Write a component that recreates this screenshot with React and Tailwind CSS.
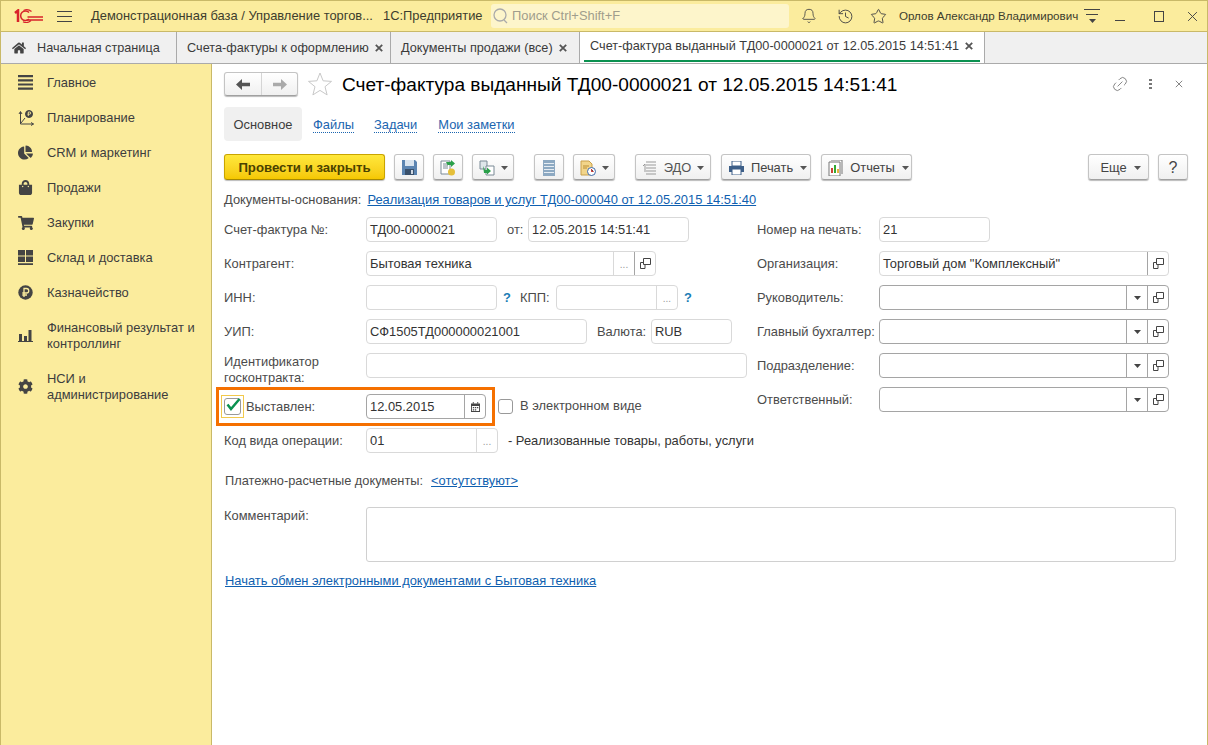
import React from "react";
import { Bell, History, Star, Link2 } from "lucide-react";
import { FaHome, FaChartPie, FaShoppingBag, FaShoppingCart, FaCog } from "react-icons/fa";

const X = ({ c = "#555", s = 8, w = 1.8 }) => (
  <svg width={s} height={s} viewBox="0 0 8 8" className="shrink-0"><path d="M.8.8l6.4 6.4M7.2.8L.8 7.2" stroke={c} strokeWidth={w} /></svg>
);
const Caret = ({ c = "#555" }) => (
  <svg width="7" height="4" viewBox="0 0 7 4" className="shrink-0"><path d="M0 0h7L3.5 4z" fill={c} /></svg>
);
const Copy = () => (
  <svg width="11" height="11" viewBox="0 0 11 11" fill="none" stroke="#444"><path d="M3.500.5h7v6h-7zM3.500 4.500h-3v6h4.500V6.500" /></svg>
);

const Logo = () => (
  <svg width="30" height="14" viewBox="0 0 30 14" fill="none" stroke="#d8232a" strokeWidth="1.500">
    <path d="M1 4l3-2.500V13" strokeWidth="2.500" />
    <path d="M15 3.500a4.800 4.800 0 1 0 0 6.500" strokeWidth="1.500" />
    <path d="M17.500 2.500a7.500 7.500 0 0 0-8-1M17 11.500a7 7 0 0 1-8 1.200" strokeWidth="1.200" />
    <path d="M13.500 8H29M12.500 11H29" strokeWidth="1.500" />
  </svg>
);

const Sb = {
  main: <svg width="15" height="15" viewBox="0 0 15 15" fill="#444"><path d="M0 0h15v2.200H0zM0 4.200h15v2.200H0zM0 8.400h15v2.200H0zM0 12.600h15v2.200H0z" /></svg>,
  plan: <svg width="16" height="16" viewBox="0 0 16 16" fill="none" stroke="#444"><path d="M2.500 2v12h13M1 4l1.500-2.500L4 4M13 12.500l2.500 1.500-2.500 1.500M3 13l4-5" /><circle cx="11" cy="4" r="3.500" fill="#444" /><path d="M10.300 6V2h1.300a1 1 0 0 1 0 2.200H9.500" stroke="#fbec9d" strokeWidth=".9" /></svg>,
  crm: <FaChartPie size={15} color="#444" />,
  sale: <FaShoppingBag size={15} color="#444" />,
  cart: <FaShoppingCart size={16} color="#444" />,
  store: <svg width="15" height="15" viewBox="0 0 15 15" fill="#444"><path d="M0 0h7v5.500H0zM8 0h7v5.500H8zM0 6.500h7V12H0zM8 6.500h7V12H8zM0 13.300h15V15H0z" /></svg>,
  money: <svg width="15" height="15" viewBox="0 0 15 15"><circle cx="7.500" cy="7.500" r="7.200" fill="#444" /><path d="M6 12V3.500h2.500a2.200 2.200 0 0 1 0 4.500H4.300M4.300 10H9" stroke="#fbec9d" strokeWidth="1.300" fill="none" /></svg>,
  fin: <svg width="15" height="13" viewBox="0 0 15 13" fill="#444"><path d="M1 5h3v7H1zM6 7h3v5H6zM10.500 1h3v11h-3zM0 12h15v1H0z" /></svg>,
  gear: <FaCog size={15} color="#444" />,
};

const menu = [
  ["main", ["Главное"], 35],
  ["plan", ["Планирование"], 35],
  ["crm", ["CRM и маркетинг"], 35],
  ["sale", ["Продажи"], 35],
  ["cart", ["Закупки"], 35],
  ["store", ["Склад и доставка"], 35],
  ["money", ["Казначейство"], 35],
  ["fin", ["Финансовый результат и", "контроллинг"], 51],
  ["gear", ["НСИ и", "администрирование"], 51],
];

const Btn = ({ w, children, className = "" }) => (
  <div className={`h-[26px] pt-[1px] flex items-center justify-center gap-[7px] shrink-0 rounded-[3px] border border-[#c4c4c4] border-b-[#a0a0a0] bg-gradient-to-b from-white to-[#f0f0f0] shadow-[0_1px_1px_#bbb] text-[#444] ${w} ${className}`}>
    {children}
  </div>
);

const IField = ({ w, value = "", dark, parts = [], className = "" }) => (
  <div className={`h-[25px] flex shrink-0 items-stretch rounded-[4px] border bg-white text-[#333] ${dark ? "border-[#a5a5a5]" : "border-[#d9d9d9]"} ${w} ${className}`}>
    <div className="flex-1 pl-[3px] leading-[23px] whitespace-nowrap overflow-hidden">{value}</div>
    {parts.map((p, i) => (
      <div key={i} className={`w-[21px] flex items-center justify-center border-l ${p === "dots" ? "border-[#d9d9d9] text-[#999] text-[10px] pt-[3px]" : "border-[#a5a5a5]"}`}>
        {p === "dots" && "..."}
        {p === "copy" && <Copy />}
        {p === "caret" && <Caret c="#444" />}
        {p === "cal" && (
          <svg width="9" height="10" viewBox="0 0 10 11" fill="#444"><path d="M0 1.500h10V11H0zm1 3V10h8V4.500z" fillRule="evenodd" /><path d="M2 0h1v2H2zM7 0h1v2H7zM2 5.500h1.500V7H2zM4.300 5.500h1.500V7H4.300zM6.600 5.500h1.500V7H6.600zM2 8h1.500v1.500H2zM4.300 8h1.500v1.500H4.300z" /></svg>
        )}
      </div>
    ))}
  </div>
);

const Label = ({ children, w = "w-[142px]" }) => <div className={`${w} shrink-0 text-[#4b4b4b] whitespace-nowrap`}>{children}</div>;
const Row = ({ children, className = "" }) => <div className={`h-[25px] flex items-center ${className}`}>{children}</div>;
const Q = ({ className }) => <span className={`font-bold text-[#1a7db5] ${className}`}>?</span>;

export default function App() {
  return (
    <div className="w-[1208px] h-[745px] overflow-hidden flex flex-col bg-white border-x border-[#c9b968] text-[12.9px] leading-[16px] text-[#333] font-['Liberation_Sans',Arial,sans-serif]">
      {/* Title bar */}
      <div className="h-[32px] shrink-0 flex items-center bg-[#fbec9d] border-y border-[#c9b968] text-[#3d3d2e]">
        <div className="w-[30px] ml-[13px]"><Logo /></div>
        <div className="ml-[13px] w-[15px] flex flex-col gap-[4px]">
          <div className="h-[1px] bg-[#444]" /><div className="h-[1px] bg-[#444]" /><div className="h-[1px] bg-[#444]" />
        </div>
        <div className="ml-[19px] w-[282px] whitespace-nowrap">Демонстрационная база / Управление торгов...</div>
        <div className="ml-[10px] w-[96px] whitespace-nowrap">1С:Предприятие</div>
        <div className="ml-[12px] w-[298px] h-[24px] rounded-[3px] bg-[#fdf5cb] flex items-center pl-[2px] text-[#a09d8c]">
          <svg width="16" height="18" viewBox="0 0 16 18" fill="none" stroke="#aaa" strokeWidth="1.300"><circle cx="7" cy="8" r="6" /><path d="M11 13l3 3" /></svg>
          <span className="ml-[3px]">Поиск Ctrl+Shift+F</span>
        </div>
        <div className="ml-[12px] w-[16px]"><Bell size={16} strokeWidth={1.300} color="#444" /></div>
        <div className="ml-[20px] w-[17px]"><History size={17} strokeWidth={1.300} color="#444" /></div>
        <div className="ml-[16px] w-[17px]"><Star size={17} strokeWidth={1.300} color="#444" /></div>
        <div className="ml-[12px] w-[172px] text-[11.600px] whitespace-nowrap">Орлов Александр Владимирович</div>
        <div className="ml-[13px] w-[16px] flex flex-col items-center gap-[4px]">
          <div className="h-[1px] w-[16px] bg-[#444]" /><div className="h-[1px] w-[12px] bg-[#444]" /><Caret c="#444" />
        </div>
        <div className="ml-[15px] w-[10px] h-[1px] self-center mt-[8px] bg-[#444]" />
        <div className="ml-[29px] w-[10px] h-[11px] border border-[#444]" />
        <div className="ml-[23px]"><X c="#444" s={11} w={.7} /></div>
      </div>
      {/* Tabs */}
      <div className="h-[32px] shrink-0 flex bg-[#f0f0f0] border-b border-[#aaa] text-[#3b3b3b] text-[12.700px]">
        <div className="w-[176px] flex items-center border-r border-[#aaa] pl-[11px]">
          <FaHome size={14} color="#444" /><span className="ml-[11px] whitespace-nowrap">Начальная страница</span>
        </div>
        <div className="w-[214px] flex items-center border-r border-[#aaa] pl-[10px] gap-[6px] whitespace-nowrap">
          Счета-фактуры к оформлению <X />
        </div>
        <div className="w-[189px] flex items-center border-r border-[#aaa] pl-[10px] gap-[6px] whitespace-nowrap">
          Документы продажи (все) <X />
        </div>
        <div className="w-[405px] bg-white border-r border-[#aaa] px-[4px] flex flex-col">
          <div className="flex-1 flex items-center pl-[6px] gap-[6px] whitespace-nowrap">
            Счет-фактура выданный ТД00-0000021 от 12.05.2015 14:51:41 <X />
          </div>
          <div className="h-[2px] bg-[#0a9150] mb-[1px]" />
        </div>
      </div>
      <div className="flex-1 flex min-h-0">
        {/* Sidebar */}
        <div className="w-[211px] shrink-0 bg-[#fbec9d] border-r border-[#c9b968] pt-[1px] text-[#3d3d3d]">
          {menu.map(([ic, lines, h], i) => (
            <div key={i} style={{ height: h }} className="flex items-center pl-[17px]">
              <div className="w-[29px] shrink-0 flex">{Sb[ic]}</div>
              <div className="whitespace-nowrap">{lines.map((l) => <div key={l}>{l}</div>)}</div>
            </div>
          ))}
        </div>
        {/* Content */}
        <div className="flex-1 px-[12px] min-w-0">
          <div className="h-[24px] mt-[8px] flex items-center pr-[12px]">
            <div className="w-[74px] h-[24px] flex rounded-[3px] border border-[#c4c4c4] border-b-[#a0a0a0] bg-gradient-to-b from-white to-[#f0f0f0] shadow-[0_1px_1px_#bbb]">
              <div className="w-[37px] flex items-center justify-center border-r border-[#d5d5d5]">
                <svg width="14" height="11" viewBox="0 0 14 11" fill="#555"><path d="M0 5.500L6 0v3.800h8v3.400H6V11z" /></svg>
              </div>
              <div className="flex-1 flex items-center justify-center">
                <svg width="14" height="11" viewBox="0 0 14 11" fill="#aaa"><path d="M14 5.500L8 0v3.800H0v3.400h8V11z" /></svg>
              </div>
            </div>
            <svg className="ml-[10px]" width="24" height="24" viewBox="0 0 24 24" fill="none" stroke="#c8c8c8"><path d="M12 1l3.100 7.800 8.400.6-6.500 5.300 2.100 8.200L12 18.400l-7.100 4.500L7 14.700.5 9.400l8.400-.6z" /></svg>
            <div className="ml-[10px] pt-[2px] text-[19.100px] leading-[24px] text-black whitespace-nowrap">Счет-фактура выданный ТД00-0000021 от 12.05.2015 14:51:41</div>
            <div className="ml-auto flex items-center">
              <Link2 size={18} strokeWidth={1.100} color="#777" className="-rotate-45" />
              <div className="ml-[20px] flex flex-col gap-[2px]"><i className="block w-[3px] h-[2px] bg-[#777]" /><i className="block w-[3px] h-[2px] bg-[#777]" /><i className="block w-[3px] h-[2px] bg-[#777]" /></div>
              <div className="ml-[23px]"><X c="#777" s={8} w={.9} /></div>
            </div>
          </div>
          <div className="mt-[11px] h-[34px] flex items-center">
            <div className="w-[78px] h-[34px] pt-[1px] flex items-center justify-center rounded-[4px] bg-[#f0f0f0] text-[#3d3d3d]">Основное</div>
            {[["Файлы", "ml-[11px]"], ["Задачи", "ml-[20px]"], ["Мои заметки", "ml-[21px]"]].map(([t, c]) => (
              <span key={t} className={`${c} mt-[2px] text-[#1a65b0] border-b border-dotted border-[#1a65b0] leading-[14px]`}>{t}</span>
            ))}
          </div>
          <div className="mt-[13px] h-[26px] flex items-center">
            <div className="w-[161px] h-[26px] pt-[1px] flex items-center justify-center rounded-[3px] border border-[#c9a400] border-b-[#a88a00] bg-gradient-to-b from-[#ffe83a] to-[#f5c800] shadow-[0_1px_1px_#bbb] font-bold text-[13.200px] text-[#4a4200]">Провести и закрыть</div>
            <Btn w="w-[30px]" className="ml-[9px]">
              <svg width="15" height="15" viewBox="0 0 15 15"><path d="M0 0h13l2 2v13H0z" fill="#5b84b1" /><path d="M3 0h9v6H3z" fill="#d9e4ef" /><path d="M3 9h9v6H3z" fill="#39506b" /><path d="M9 10h2v4H9z" fill="#cfd8e3" /></svg>
            </Btn>
            <Btn w="w-[30px]" className="ml-[9px]">
              <svg width="16" height="16" viewBox="0 0 16 16"><path d="M1 1h9v13H1z" fill="#fff" stroke="#7a8a96" /><path d="M3 4h5M3 6h5M3 8h5" stroke="#7a8a96" /><ellipse cx="11.500" cy="12" rx="3.500" ry="3.500" fill="#e5bf3a" /><path d="M6 2h5V0l4 3.500-4 3.500V5H8v1z" fill="#2aa04a" /></svg>
            </Btn>
            <Btn w="w-[42px]" className="ml-[9px] !gap-[6px]">
              <svg width="16" height="16" viewBox="0 0 16 16"><path d="M1 1h7v8H1z" fill="#dfe6ea" stroke="#7a8a96" /><path d="M7 6h8v9H7z" fill="#fff" stroke="#7a8a96" /><path d="M4 6l2 4h2V7.500L12 11l-4 3.500V13H5z" fill="#2aa04a" /></svg>
              <Caret />
            </Btn>
            <Btn w="w-[30px]" className="ml-[20px]">
              <svg width="12" height="16" viewBox="0 0 12 16"><path d="M0 0h12v16H0z" fill="#8da9c2" /><path d="M1 3.500h10M1 6.500h10M1 9.500h10M1 12.500h10" stroke="#e6edf3" /></svg>
            </Btn>
            <Btn w="w-[42px]" className="ml-[9px] !gap-[6px]">
              <svg width="16" height="16" viewBox="0 0 16 16"><path d="M1 1h8l3 3v11H1z" fill="#f2d58a" stroke="#c9a04a" /><path d="M3 6h6M3 8h4" stroke="#b98d33" /><circle cx="11.500" cy="11.500" r="4" fill="#fff" stroke="#3f6aa8" /><path d="M11.500 9v2.500h2" stroke="#c33" /></svg>
              <Caret />
            </Btn>
            <Btn w="w-[76px]" className="ml-[20px] !gap-[6px]">
              <svg width="16" height="14" viewBox="0 0 16 14" fill="none" stroke="#999"><path d="M4 1h10M4 4h10M4 7h10M4 10h10M4 13h10M1 5L3 3v8" /></svg>
              <span className="text-[#555]">ЭДО</span><Caret />
            </Btn>
            <Btn w="w-[90px]" className="ml-[10px] pl-[4px]">
              <svg width="15" height="14" viewBox="0 0 15 14"><path d="M3 0h9v5H3z" fill="#fff" stroke="#3d5f88" /><path d="M0 5h15v6H0z" fill="#3d5f88" /><path d="M3 8h9v6H3z" fill="#fff" stroke="#3d5f88" /></svg>
              <span>Печать</span><Caret />
            </Btn>
            <Btn w="w-[91px]" className="ml-[10px] pl-[4px]">
              <svg width="15" height="16" viewBox="0 0 15 16"><path d="M3 0h11v14" fill="none" stroke="#777" /><path d="M1 2h11v14H1z" fill="#fff" stroke="#777" /><path d="M3 8h2v5H3z" fill="#c43" /><path d="M6 5h2v8H6z" fill="#3a3" /><path d="M9 9h2v4H9z" fill="#e7b53a" /></svg>
              <span>Отчеты</span><Caret />
            </Btn>
            <Btn w="w-[61px]" className="ml-auto mr-[9px] pl-[4px]"><span>Еще</span><Caret /></Btn>
            <Btn w="w-[30px]" className="mr-[7px]"><span className="text-[16px]">?</span></Btn>
          </div>

          <div className="mt-[11px] h-[18px] flex items-center">
            <span className="text-[#4b4b4b]">Документы-основания:</span>
            <span className="ml-[6px] text-[#0f5fb0] underline whitespace-nowrap">Реализация товаров и услуг ТД00-000040 от 12.05.2015 14:51:40</span>
          </div>

          <div className="mt-[8px] flex">
            <div className="w-[533px] shrink-0 flex flex-col gap-[9px]">
              <Row>
                <Label>Счет-фактура №:</Label>
                <IField w="w-[131px]" value="ТД00-0000021" />
                <span className="ml-[10px] w-[21px] text-[#4b4b4b]">от:</span>
                <IField w="w-[161px]" value="12.05.2015 14:51:41" />
              </Row>
              <Row>
                <Label>Контрагент:</Label>
                <IField w="w-[290px]" value="Бытовая техника" parts={["dots", "copy"]} />
              </Row>
              <Row>
                <Label>ИНН:</Label>
                <IField w="w-[131px]" />
                <Q className="ml-[6px]" />
                <span className="ml-[9px] w-[34px] text-[#4b4b4b]">КПП:</span>
                <IField w="w-[122px]" parts={["dots"]} className="ml-[2px]" />
                <Q className="ml-[6px]" />
              </Row>
              <Row>
                <Label>УИП:</Label>
                <IField w="w-[221px]" value="СФ1505ТД000000021001" />
                <span className="ml-[10px] w-[54px] text-[#4b4b4b]">Валюта:</span>
                <IField w="w-[81px]" value="RUB" />
              </Row>
              <div className="h-[25px] flex items-start">
                <Label><div className="pt-[1px]">Идентификатор<br />госконтракта:</div></Label>
                <IField w="w-[381px]" />
              </div>
              <div className="h-[41px] -mb-[9px] flex items-start">
                <div className="-ml-[8px] w-[279px] h-[39px] shrink-0 flex items-center border-[3px] border-[#f57000]">
                  <div className="ml-[2px] w-[23px] h-[23px] shrink-0 flex items-center justify-center border border-[#f2c94c]">
                    <div className="w-[17px] h-[17px] rounded-[3px] border border-[#999] flex items-center justify-center bg-white relative">
                      <svg className="absolute -top-[1px] left-[1px]" width="15" height="13" viewBox="0 0 15 13" fill="none" stroke="#0a9150" strokeWidth="2.500"><path d="M1.500 6.500l3.500 4.500L13.500 1" /></svg>
                    </div>
                  </div>
                  <span className="ml-[2px] w-[120px] text-[#4b4b4b]">Выставлен:</span>
                  <IField w="w-[120px]" value="12.05.2015" dark parts={["cal"]} />
                </div>
                <div className="ml-[3px] mt-[11px] flex items-center text-[#4b4b4b] whitespace-nowrap">
                  <div className="w-[15px] h-[15px] rounded-[3px] border border-[#999] shrink-0" />
                  <span className="ml-[7px]">В электронном виде</span>
                </div>
              </div>
              <Row>
                <Label>Код вида операции:</Label>
                <IField w="w-[132px]" value="01" parts={["dots"]} />
                <span className="ml-[10px] whitespace-nowrap">- Реализованные товары, работы, услуги</span>
              </Row>
            </div>
            <div className="flex-1 flex flex-col gap-[9px]">
              <Row><Label w="w-[122px]">Номер на печать:</Label><IField w="w-[111px]" value="21" /></Row>
              <Row><Label w="w-[122px]">Организация:</Label><IField w="w-[290px]" value={'Торговый дом "Комплексный"'} parts={["copy"]} /></Row>
              <Row><Label w="w-[122px]">Руководитель:</Label><IField w="w-[290px]" dark parts={["caret", "copy"]} /></Row>
              <Row><Label w="w-[122px]">Главный бухгалтер:</Label><IField w="w-[290px]" dark parts={["caret", "copy"]} /></Row>
              <Row><Label w="w-[122px]">Подразделение:</Label><IField w="w-[290px]" dark parts={["caret", "copy"]} /></Row>
              <Row><Label w="w-[122px]">Ответственный:</Label><IField w="w-[290px]" dark parts={["caret", "copy"]} /></Row>
            </div>
          </div>

          <div className="mt-[19px] h-[18px] flex items-center pl-[1px]">
            <span className="text-[#4b4b4b] text-[12.800px]">Платежно-расчетные документы:</span>
            <span className="ml-[8px] text-[#0f5fb0] underline">&lt;отсутствуют&gt;</span>
          </div>
          <div className="mt-[17px] flex items-start">
            <Label><div className="pt-[1px]">Комментарий:</div></Label>
            <div className="w-[810px] h-[55px] rounded-[3px] border border-[#d0d0d0]" />
          </div>
          <div className="mt-[10px] h-[18px] flex items-center pl-[1px]">
            <span className="text-[#0f5fb0] underline whitespace-nowrap">Начать обмен электронными документами с Бытовая техника</span>
          </div>
        </div>
      </div>
    </div>
  );
}
